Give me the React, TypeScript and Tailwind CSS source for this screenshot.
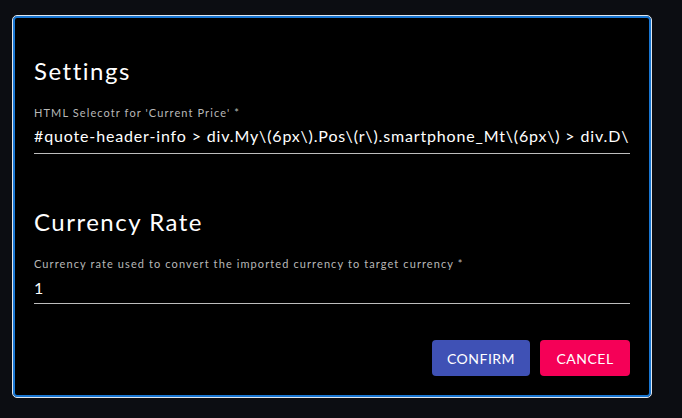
export default function App() {
  const font = { fontFamily: "Lato, 'Noto Sans', sans-serif" };
  return (
    <div className="w-[682px] h-[418px] bg-[#0c0d12] pt-[16px] pl-[13px]" style={font}>
      <div className="w-[638px] h-[381px] rounded-[4px] bg-black border-2 border-[#1976d2] outline outline-1 outline-[#dfe6ee] flex flex-col px-[19px] pt-[37px]">
        <div className="text-white text-[24px] leading-[32px] tracking-[1.5px]">Settings</div>
        <div className="mt-[19px] text-[#b8b8b8] text-[11px] leading-[14px] tracking-[1.1px]">HTML Selecotr for 'Current Price' *</div>
        <div className="mt-[5px] border-b border-[#bdbdbd] pb-[6px] overflow-hidden whitespace-nowrap text-white text-[16px] leading-[22px] tracking-[0.85px]">
          #quote-header-info &gt; div.My\(6px\).Pos\(r\).smartphone_Mt\(6px\) &gt; div.D\
        </div>
        <div className="mt-[52px] text-white text-[24px] leading-[32px] tracking-[1.5px]">Currency Rate</div>
        <div className="mt-[19px] text-[#b8b8b8] text-[11px] leading-[14px] tracking-[1.1px]">Currency rate used to convert the imported currency to target currency *</div>
        <div className="mt-[6px] border-b border-[#bdbdbd] pb-[4px] text-white text-[16px] leading-[22px]">1</div>
        <div className="mt-[36px] flex justify-end gap-[10px]">
          <button className="w-[98px] h-[36px] rounded-[4px] bg-[#3f51b5] text-white text-[14px] tracking-[0.5px] flex items-center justify-center">CONFIRM</button>
          <button className="w-[90px] h-[36px] rounded-[4px] bg-[#f50057] text-white text-[14px] tracking-[0.5px] flex items-center justify-center">CANCEL</button>
        </div>
      </div>
    </div>
  );
}
